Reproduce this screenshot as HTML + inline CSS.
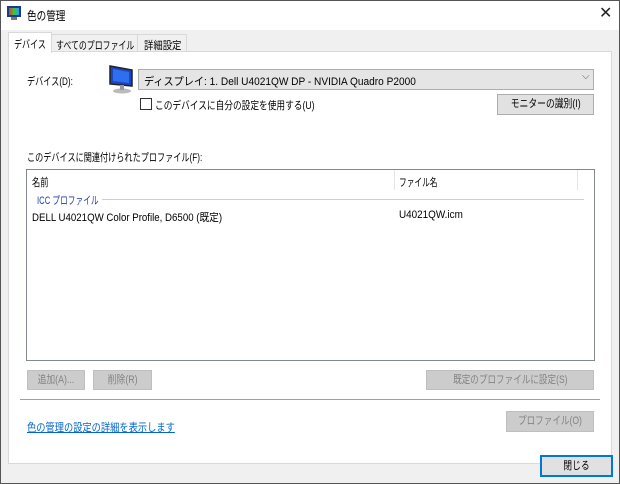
<!DOCTYPE html>
<html><head><meta charset="utf-8"><style>
*{margin:0;padding:0;box-sizing:border-box}
body{width:620px;height:484px;background:#f0f0f0;font-family:"Liberation Sans","Noto Sans CJK JP",sans-serif;font-size:11px;color:#000;position:relative;overflow:hidden}
.a{position:absolute;white-space:nowrap}
.s{display:inline-block;transform-origin:0 50%}
.btn{position:absolute;background:#e1e1e1;border:1px solid #adadad;text-align:center;font-size:11px}
.btn .s{transform-origin:50% 50%}
.dis{background:#cccccc;border-color:#bfbfbf;color:#838383}
</style></head><body>
<div class="a" style="left:0;top:0;width:620px;height:484px;border:1px solid #555"></div>
<div class="a" style="left:1px;top:1px;width:618px;height:29px;background:#fff"></div>
<svg class="a" style="left:7px;top:6px" width="14" height="14"><defs><linearGradient id="g"><stop offset="0" stop-color="#e33"/><stop offset=".5" stop-color="#3c3"/><stop offset="1" stop-color="#39f"/></linearGradient></defs><rect x="0" y="0" width="14" height="11" fill="#1a3a8a"/><rect x="2" y="2" width="10" height="7" fill="url(#g)"/><rect x="4" y="11" width="6" height="3" fill="#777"/></svg>
<div class="a" style="left:27px;top:7px;font-size:12px"><span class="s" style="transform:scaleX(.8)">色の管理</span></div>
<div class="a" style="left:599px;top:3px;font-size:16px;color:#222">✕</div>
<div class="a" style="left:8px;top:51px;width:604px;height:413px;background:#fff;border:1px solid #d9d9d9"></div>
<div class="a" style="left:51px;top:34px;width:87px;height:18px;border:1px solid #d9d9d9;background:#f0f0f0;padding:2px 0 0 4px"><span class="s" style="transform:scaleX(.72)">すべてのプロファイル</span></div>
<div class="a" style="left:137px;top:34px;width:50px;height:18px;border:1px solid #d9d9d9;background:#f0f0f0;padding:2px 0 0 6px"><span class="s" style="transform:scaleX(.85)">詳細設定</span></div>
<div class="a" style="left:8px;top:32px;width:44px;height:21px;border:1px solid #d9d9d9;border-bottom:none;background:#fff;padding:3px 0 0 5px"><span class="s" style="transform:scaleX(.73)">デバイス</span></div>
<div class="a" style="left:27px;top:73px"><span class="s" style="transform:scaleX(.74)">デバイス(D):</span></div>
<svg class="a" style="left:108px;top:64px" width="26" height="30"><polygon points="2,2 24,6 24,22 2,20" fill="#1c46c0" stroke="#222" stroke-width="1.5"/><polygon points="5,5 21,8 21,19 5,17" fill="#2d6ff0"/><ellipse cx="14" cy="27" rx="9" ry="2.5" fill="#bbb"/><rect x="12" y="21" width="4" height="5" fill="#999"/></svg>
<div class="a" style="left:138px;top:69px;width:456px;height:21px;background:#e5e5e5;border:1px solid #adadad;padding:3px 0 0 5px"><span class="s" style="transform:scaleX(.92)">ディスプレイ: 1. Dell U4021QW DP - NVIDIA Quadro P2000</span></div>
<div class="a" style="left:582px;top:71px;font-size:10px;color:#555">⌵</div>
<div class="a" style="left:140px;top:98px;width:12px;height:12px;border:1px solid #333;background:#fff"></div>
<div class="a" style="left:155px;top:97px"><span class="s" style="transform:scaleX(.79)">このデバイスに自分の設定を使用する(U)</span></div>
<div class="btn" style="left:497px;top:94px;width:97px;height:21px;line-height:19px"><span class="s" style="transform:scaleX(.8)">モニターの識別(I)</span></div>
<div class="a" style="left:27px;top:149px"><span class="s" style="transform:scaleX(.74)">このデバイスに関連付けられたプロファイル(F):</span></div>
<div class="a" style="left:26px;top:169px;width:569px;height:192px;border:1px solid #828790;background:#fff"></div>
<div class="a" style="left:394px;top:170px;width:1px;height:20px;background:#e5e5e5"></div>
<div class="a" style="left:577px;top:170px;width:1px;height:20px;background:#e5e5e5"></div>
<div class="a" style="left:32px;top:174px"><span class="s" style="transform:scaleX(.75)">名前</span></div>
<div class="a" style="left:399px;top:174px"><span class="s" style="transform:scaleX(.7)">ファイル名</span></div>
<div class="a" style="left:37px;top:192px;color:#1e3ea6"><span class="s" style="transform:scaleX(.7)">ICC プロファイル</span></div>
<div class="a" style="left:102px;top:199px;width:482px;height:1px;background:#c5d0e6"></div>
<div class="a" style="left:32px;top:209px"><span class="s" style="transform:scaleX(.88)">DELL U4021QW Color Profile, D6500 (既定)</span></div>
<div class="a" style="left:399px;top:209px"><span class="s" style="transform:scaleX(.9)">U4021QW.icm</span></div>
<div class="btn dis" style="left:27px;top:370px;width:58px;height:20px;line-height:18px"><span class="s" style="transform:scaleX(.8)">追加(A)...</span></div>
<div class="btn dis" style="left:93px;top:370px;width:59px;height:20px;line-height:18px"><span class="s" style="transform:scaleX(.8)">削除(R)</span></div>
<div class="btn dis" style="left:426px;top:370px;width:168px;height:20px;line-height:18px"><span class="s" style="transform:scaleX(.78)">既定のプロファイルに設定(S)</span></div>
<div class="a" style="left:20px;top:399px;width:580px;height:1px;background:#a0a0a0"></div>
<div class="a" style="left:27px;top:419px;color:#0066cc"><span class="s" style="transform:scaleX(.84);text-decoration:underline">色の管理の設定の詳細を表示します</span></div>
<div class="btn dis" style="left:506px;top:411px;width:88px;height:21px;line-height:19px"><span class="s" style="transform:scaleX(.78)">プロファイル(O)</span></div>
<div class="btn" style="left:540px;top:455px;width:73px;height:22px;line-height:19px;border:2px solid #0078d7"><span class="s" style="transform:scaleX(.8)">閉じる</span></div>
</body></html>
